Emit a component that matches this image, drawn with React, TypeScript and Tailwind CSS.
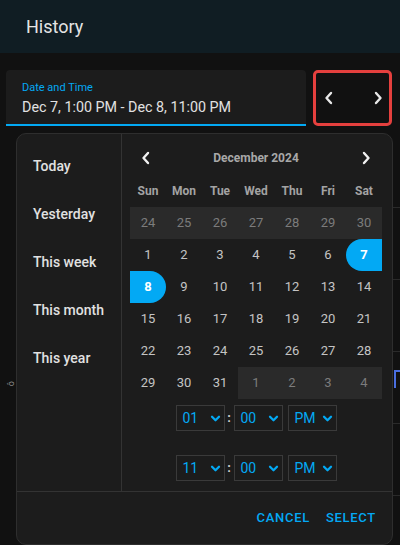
import { FC } from 'react';

const ChevronLeft: FC<{ className?: string }> = ({ className }) => (
    <svg viewBox="0 0 10 16" className={className} fill="none" stroke="currentColor" strokeWidth={2.4} strokeLinecap="round" strokeLinejoin="round">
        <polyline points="7,3 2.5,8 7,13" />
    </svg>
);

const ChevronRight: FC<{ className?: string }> = ({ className }) => (
    <svg viewBox="0 0 10 16" className={className} fill="none" stroke="currentColor" strokeWidth={2.4} strokeLinecap="round" strokeLinejoin="round">
        <polyline points="3,3 7.5,8 3,13" />
    </svg>
);

const ChevronDown: FC = () => (
    <svg viewBox="0 0 12 8" className="w-[11px] h-[7px]" fill="none" stroke="currentColor" strokeWidth={2.6} strokeLinecap="round" strokeLinejoin="round">
        <polyline points="2,2 6,6 10,2" />
    </svg>
);

interface Day {
    n: number;
    out?: boolean;
    start?: boolean;
    end?: boolean;
}

const weeks: Day[][] = [
    [24, 25, 26, 27, 28, 29, 30].map((n) => ({ n, out: true })),
    [1, 2, 3, 4, 5, 6].map((n) => ({ n })).concat([{ n: 7, start: true } as Day]),
    [{ n: 8, end: true } as Day].concat([9, 10, 11, 12, 13, 14].map((n) => ({ n }))),
    [15, 16, 17, 18, 19, 20, 21].map((n) => ({ n })),
    [22, 23, 24, 25, 26, 27, 28].map((n) => ({ n })),
    [29, 30, 31].map((n) => ({ n })).concat([1, 2, 3, 4].map((n) => ({ n, out: true }))),
];

const dayNames = ['Sun', 'Mon', 'Tue', 'Wed', 'Thu', 'Fri', 'Sat'];
const presets = ['Today', 'Yesterday', 'This week', 'This month', 'This year'];

const TimeSelect: FC<{ value: string }> = ({ value }) => (
    <div className="w-[49px] h-[26px] border border-[#3a3a3a] flex items-center justify-between pl-[6px] pr-[3px] text-[14px] text-[#03a9f4]">
        <span>{value}</span>
        <ChevronDown />
    </div>
);

const TimeRow: FC<{ hour: string; minute: string; ampm: string }> = ({ hour, minute, ampm }) => (
    <div className="flex items-center justify-center">
        <TimeSelect value={hour} />
        <span className="w-[9px] text-center text-[13px] font-bold text-[#d0d0d0]">:</span>
        <TimeSelect value={minute} />
        <div className="w-[5px]" />
        <TimeSelect value={ampm} />
    </div>
);

export default function App() {
    return (
        <div className="relative w-[400px] h-[545px] overflow-hidden bg-[#111111] font-['Roboto',sans-serif]">
            <header className="h-[53px] bg-[#101d23] flex items-center pl-[26px]">
                <h1 className="text-[18px] text-[#e4e4e4]">History</h1>
            </header>

            <div className="flex items-start pl-[6px] pt-[17px]">
                <div className="w-[300px] h-[56px] bg-[#1c1c1c] rounded-t-[4px] border-b-2 border-[#03a9f4] pl-[16px] pt-[11px]">
                    <div className="text-[11px] leading-[14px] text-[#03a9f4]">Date and Time</div>
                    <div className="text-[14.3px] leading-[20px] text-[#e1e1e1] mt-[2px]">Dec 7, 1:00 PM - Dec 8, 11:00 PM</div>
                </div>
                <div className="ml-[7px] w-[79px] h-[56px] border-[3px] border-[#e5403e] rounded-[5px] flex items-center justify-between pl-[8px] pr-[6px] text-[#e8e8e8]">
                    <ChevronLeft className="w-[10px] h-[16px]" />
                    <ChevronRight className="w-[10px] h-[16px]" />
                </div>
            </div>

            {/* chart gridlines behind the picker */}
            <div className="mt-[10px] ml-[30px] flex flex-col">
                {[0, 1, 2, 3, 4].map((i) => (
                    <div key={i} className="h-[72px] border-b border-[#2a2a2a]" />
                ))}
            </div>
            <div className="absolute left-[394px] top-[370px] w-[6px] h-[18px] border-l-2 border-t-2 border-[#4a6ee0]" />
            <div className="absolute left-[9px] top-[377px] text-[9px] text-[#8a8a8a] -rotate-90">ô</div>

            <div className="absolute left-[16px] top-[133px] w-[377px] h-[412px] bg-[#1c1c1c] border border-[#2e2e2e] rounded-[10px] flex flex-col overflow-hidden">
                <div className="flex h-[357px]">
                    <div className="w-[105px] border-r border-[#333333] pt-[8px]">
                        {presets.map((p) => (
                            <div key={p} className="h-[48px] flex items-center pl-[16px] text-[14px] font-medium text-[#e1e1e1]">
                                {p}
                            </div>
                        ))}
                    </div>
                    <div className="pl-[8px] pt-[12px] flex flex-col">
                        <div className="w-[252px] h-[24px] flex items-center justify-between px-[11px] text-[#f0f0f0]">
                            <ChevronLeft className="w-[10px] h-[16px]" />
                            <span className="text-[12px] font-bold text-[#a8a8a8]">December 2024</span>
                            <ChevronRight className="w-[10px] h-[16px]" />
                        </div>
                        <div className="grid grid-cols-7 w-[252px] mt-[5px]">
                            {dayNames.map((d) => (
                                <div key={d} className="h-[32px] flex items-center justify-center text-[12px] font-bold text-[#a3a3a3]">
                                    {d}
                                </div>
                            ))}
                            {weeks.flat().map((d, i) => (
                                <div
                                    key={i}
                                    className={`h-[32px] flex items-center justify-center text-[13px] ${
                                        d.out
                                            ? 'bg-[#2a2a2a] text-[#7c7c7c]'
                                            : d.start
                                              ? 'bg-[#03a9f4] rounded-l-full text-white font-bold'
                                              : d.end
                                                ? 'bg-[#03a9f4] rounded-r-full text-white font-bold'
                                                : 'text-[#c4c4c4]'
                                    }`}
                                >
                                    {d.n}
                                </div>
                            ))}
                        </div>
                        <div className="w-[252px] mt-[6px] flex flex-col gap-[24px]">
                            <TimeRow hour="01" minute="00" ampm="PM" />
                            <TimeRow hour="11" minute="00" ampm="PM" />
                        </div>
                    </div>
                </div>
                <div className="flex-1 border-t border-[#333333] flex items-center justify-end pr-[16px] gap-[16px] text-[13px] font-medium tracking-[0.7px] text-[#03a9f4]">
                    <span>CANCEL</span>
                    <span>SELECT</span>
                </div>
            </div>
        </div>
    );
}
